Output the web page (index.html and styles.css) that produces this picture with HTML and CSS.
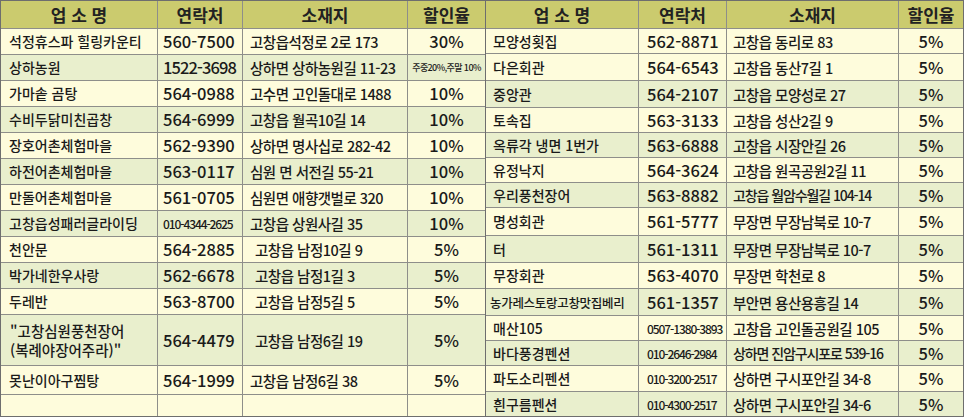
FILE: index.html
```html
<!DOCTYPE html>
<html lang="ko">
<head>
<meta charset="utf-8">
<title>할인 업소</title>
<link rel="stylesheet" href="styles.css">
</head>
<body>
<div class="sheet">
  <div class="tbl left">
    <div class="row head"><div>업 소 명</div><div>연락처</div><div>소재지</div><div>할인율</div></div>
    <div class="row"><div class="n">석정휴스파 힐링카운티</div><div class="p">560-7500</div><div class="a">고창읍석정로 2로 173</div><div class="r">30%</div></div>
    <div class="row g"><div class="n">상하농원</div><div class="p cp">1522-3698</div><div class="a">상하면 상하농원길 11-23</div><div class="r tiny">주중20%,주말 10%</div></div>
    <div class="row"><div class="n">가마솥 곰탕</div><div class="p">564-0988</div><div class="a">고수면 고인돌대로 1488</div><div class="r">10%</div></div>
    <div class="row g"><div class="n">수비두닭미친곱창</div><div class="p">564-6999</div><div class="a">고창읍 월곡10길 14</div><div class="r">10%</div></div>
    <div class="row"><div class="n">장호어촌체험마을</div><div class="p">562-9390</div><div class="a">상하면 명사십로 282-42</div><div class="r">10%</div></div>
    <div class="row g"><div class="n">하전어촌체험마을</div><div class="p">563-0117</div><div class="a">심원 면 서전길 55-21</div><div class="r">10%</div></div>
    <div class="row"><div class="n">만돌어촌체험마을</div><div class="p">561-0705</div><div class="a">심원면 애향갯벌로 320</div><div class="r">10%</div></div>
    <div class="row g"><div class="n">고창읍성패러글라이딩</div><div class="p narrow">010-4344-2625</div><div class="a">고창읍 상원사길 35</div><div class="r">10%</div></div>
    <div class="row"><div class="n">천안문</div><div class="p">564-2885</div><div class="a ind">고창읍 남정10길 9</div><div class="r">5%</div></div>
    <div class="row g"><div class="n">박가네한우사랑</div><div class="p">562-6678</div><div class="a ind">고창읍 남정1길 3</div><div class="r">5%</div></div>
    <div class="row"><div class="n">두레반</div><div class="p">563-8700</div><div class="a ind">고창읍 남정5길 5</div><div class="r">5%</div></div>
    <div class="row g"><div class="n two">"고창심원풍천장어<br>(복례야장어주라)"</div><div class="p">564-4479</div><div class="a ind">고창읍 남정6길 19</div><div class="r">5%</div></div>
    <div class="row"><div class="n">못난이아구찜탕</div><div class="p">564-1999</div><div class="a">고창읍 남정6길 38</div><div class="r">5%</div></div>
    <div class="row"><div class="n"></div><div class="p"></div><div class="a"></div><div class="r"></div></div>
  </div>
  <div class="tbl right">
    <div class="row head"><div>업 소 명</div><div>연락처</div><div>소재지</div><div>할인율</div></div>
    <div class="row"><div class="n">모양성횟집</div><div class="p">562-8871</div><div class="a">고창읍 동리로 83</div><div class="r">5%</div></div>
    <div class="row"><div class="n">다은회관</div><div class="p">564-6543</div><div class="a">고창읍 동산7길 1</div><div class="r">5%</div></div>
    <div class="row g"><div class="n">중앙관</div><div class="p">564-2107</div><div class="a">고창읍 모양성로 27</div><div class="r">5%</div></div>
    <div class="row"><div class="n">토속집</div><div class="p">563-3133</div><div class="a">고창읍 성산2길 9</div><div class="r">5%</div></div>
    <div class="row g"><div class="n">옥류각 냉면 1번가</div><div class="p">563-6888</div><div class="a">고창읍 시장안길 26</div><div class="r">5%</div></div>
    <div class="row"><div class="n">유정낙지</div><div class="p">564-3624</div><div class="a">고창읍 원곡공원2길 11</div><div class="r">5%</div></div>
    <div class="row g"><div class="n">우리풍천장어</div><div class="p">563-8882</div><div class="a cond">고창읍 월암수월길 104-14</div><div class="r">5%</div></div>
    <div class="row"><div class="n">명성회관</div><div class="p">561-5777</div><div class="a">무장면 무장남북로 10-7</div><div class="r">5%</div></div>
    <div class="row g"><div class="n">터</div><div class="p">561-1311</div><div class="a">무장면 무장남북로 10-7</div><div class="r">5%</div></div>
    <div class="row"><div class="n">무장회관</div><div class="p">563-4070</div><div class="a">무장면 학천로 8</div><div class="r">5%</div></div>
    <div class="row g"><div class="n small">농가레스토랑고창맛집베리</div><div class="p">561-1357</div><div class="a">부안면 용산용흥길 14</div><div class="r">5%</div></div>
    <div class="row"><div class="n">매산105</div><div class="p narrow">0507-1380-3893</div><div class="a">고창읍 고인돌공원길 105</div><div class="r">5%</div></div>
    <div class="row g"><div class="n">바다풍경펜션</div><div class="p narrow">010-2646-2984</div><div class="a cond">상하면 진암구시포로 539-16</div><div class="r">5%</div></div>
    <div class="row"><div class="n">파도소리펜션</div><div class="p narrow">010-3200-2517</div><div class="a">상하면 구시포안길 34-8</div><div class="r">5%</div></div>
    <div class="row g"><div class="n">흰구름펜션</div><div class="p narrow">010-4300-2517</div><div class="a">상하면 구시포안길 34-6</div><div class="r">5%</div></div>
  </div>
</div>
</body>
</html>
```
FILE: styles.css
```css
html, body {
  margin: 0;
  padding: 0;
  background: #ffffff;
}

body {
  font-family: "Noto Sans CJK KR", "Noto Sans", sans-serif;
  color: #1a1a1a;
}

.sheet {
  display: flex;
  gap: 1px;
  width: 962px;
  padding: 1px;
  background: #6e6e6e;
}

.tbl {
  display: grid;
  gap: 1px;
  background: #8e8e8a;
}

.left {
  grid-template-columns: 156px 84px 164px 77px;
  grid-template-rows: 27px repeat(11, 25px) 50px 28px 21px;
}

.right {
  grid-template-columns: 152px 87px 171px 64px;
  grid-template-rows: 27px 24px 26px 26px 24px 24px 24px 24px 27px 26px 25px 26px 24px 24px 25px 24px;
}

.row {
  display: contents;
}

.row > div {
  display: flex;
  align-items: center;
  background: #fefcdc;
  font-size: 14px;
  font-weight: 500;
  line-height: 17px;
  white-space: nowrap;
  overflow: hidden;
}

.row.g > div {
  background: #e9efcd;
}

.row.head > div {
  background: #cbcb6e;
  justify-content: center;
  font-weight: 700;
  font-size: 17px;
  color: #222;
}

.n {
  padding-left: 8px;
}

.right .n {
  padding-left: 7px;
}

.row > .p {
  padding-left: 5px;
  font-size: 16.5px;
}

.right .row > .p {
  padding-left: 8px;
}

.row > .cp {
  letter-spacing: -0.9px;
}

.row > .a {
  padding-left: 7px;
  font-size: 14.5px;
  letter-spacing: -0.5px;
}

.right .row > .a {
  padding-left: 6px;
}

.row > .a.ind {
  padding-left: 12px;
}

.row > .a.cond {
  letter-spacing: -1.1px;
  font-size: 14px;
}

.row > .r {
  justify-content: center;
  font-size: 16.5px;
}

.row > .tiny {
  font-size: 9px;
  letter-spacing: -0.6px;
}

.row > .narrow {
  font-size: 12px;
  letter-spacing: -1.1px;
}

.row > .small {
  font-size: 12.5px;
  letter-spacing: -0.3px;
  padding-left: 4px;
}

.row > .two {
  font-size: 14.5px;
  line-height: 19px;
  padding-left: 9px;
}
```
